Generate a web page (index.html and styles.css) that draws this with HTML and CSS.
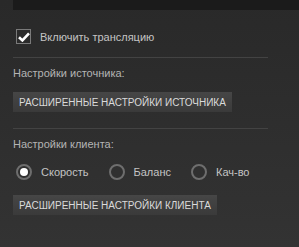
FILE: index.html
```html
<!DOCTYPE html>
<html lang="ru">
<head>
  <meta charset="UTF-8" />
  <title>Трансляция</title>
  <link rel="stylesheet" href="styles.css">
</head>
<body>
  <div class="topbar"></div>

  <div class="panel">
    <label class="check-row">
      <span class="checkbox checked">
        <svg width="12" height="10" viewBox="0 0 12 10"><path d="M1 5.2 L4.4 8.4 L11 1.4" fill="none" stroke="#fff" stroke-width="2.6"/></svg>
      </span>
      <span class="check-text">Включить трансляцию</span>
    </label>

    <div class="sep"></div>

    <div class="section-title">Настройки источника:</div>
    <button class="btn">Расширенные настройки источника</button>

    <div class="sep sep-second"></div>

    <div class="section-title">Настройки клиента:</div>
    <div class="radios">
      <label class="radio-item"><span class="radio on"></span>Скорость</label>
      <label class="radio-item"><span class="radio"></span>Баланс</label>
      <label class="radio-item"><span class="radio"></span>Кач-во</label>
    </div>
    <button class="btn">Расширенные настройки клиента</button>
  </div>
</body>
</html>
```

FILE: styles.css
```css
body {
  margin: 0;
  background: linear-gradient(#292929, #333333);
  font-family: Arial, "Liberation Sans", sans-serif;
  height: 247px;
  overflow: hidden;
}
.topbar {
  margin-left: 13px;
  height: 10px;
  background: #1b1b1b;
}
.panel { padding: 0 0 0 13px; }

.check-row {
  display: flex;
  align-items: center;
  margin-top: 19px;
  margin-left: 3px;
  height: 15px;
}
.checkbox {
  width: 13px; height: 13px;
  border: 1px solid #7a7a7a;
  display: flex; align-items: center; justify-content: center;
}
.check-text {
  margin-left: 9px;
  font-size: 11px;
  color: #c4c4c4;
}

.sep {
  width: 255px;
  height: 1px;
  background: #434343;
  margin-top: 13px;
}
.sep-second { margin-top: 16px; }

.section-title {
  font-size: 11px;
  color: #b4b4b4;
  margin-top: 8px;
  line-height: 14px;
}

.btn {
  display: block;
  margin-top: 12px;
  height: 20px;
  padding: 0 6px;
  border: none;
  background: linear-gradient(#464646, #3a3a3a);
  color: #dadada;
  font-family: inherit;
  font-size: 10px;
  text-transform: uppercase;
  cursor: pointer;
}

.radios {
  display: flex;
  margin-top: 13px;
  margin-left: 3px;
  height: 16px;
  align-items: center;
}
.radio-item {
  display: flex;
  align-items: center;
  font-size: 11px;
  color: #c4c4c4;
  margin-right: 20px;
}
.radio {
  width: 12px; height: 12px;
  border: 2px solid #6e6e6e;
  border-radius: 50%;
  margin-right: 9px;
  position: relative;
}
.radio.on::after {
  content: "";
  position: absolute;
  left: 2px; top: 2px;
  width: 8px; height: 8px;
  border-radius: 50%;
  background: #fff;
}
.radios + .btn { margin-top: 15px; }
```
